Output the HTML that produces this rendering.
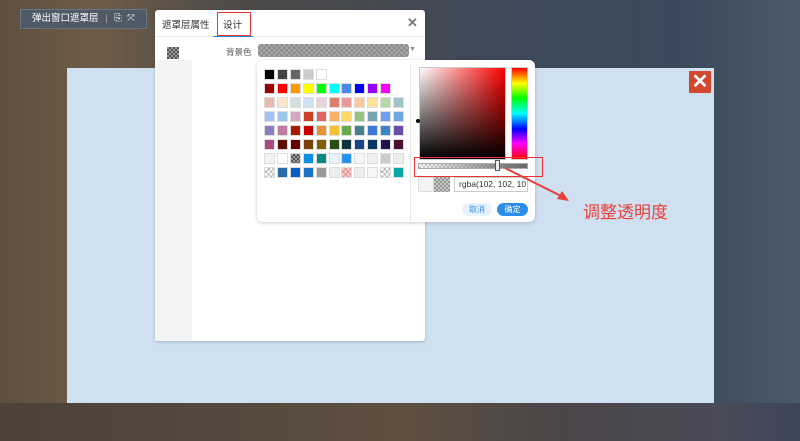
<!DOCTYPE html>
<html><head><meta charset="utf-8"><style>
*{margin:0;padding:0;box-sizing:border-box}
body{width:800px;height:441px;overflow:hidden;position:relative;font-family:"Liberation Sans","Noto Sans CJK SC",sans-serif;font-size:9px;
background:linear-gradient(90deg,#5d5040 0%,#6d5c48 12%,#4d4a48 30%,#3f4a58 60%,#3a4a5c 85%,#4a5a6a 100%);}
.bot{position:absolute;left:0;top:403px;width:800px;height:38px;background:linear-gradient(90deg,#4d4238,#54493e 30%,#5e5040 50%,#4a4548 70%,#4a4a58 90%,#3c4658)}
.abs{position:absolute}
.panel{left:67px;top:68px;width:647px;height:335px;background:#cfe0f1}
.tb{left:20px;top:9px;width:127px;height:20px;background:#505a66;border:1px solid #6a7480;color:#fff;font-size:9.5px;line-height:18px;padding-left:11px}
.dlg{left:155px;top:10px;width:270px;height:331px;background:#fff;border-radius:3px;box-shadow:0 1px 3px rgba(0,0,0,.2)}
.pop{left:257px;top:60px;width:278px;height:162px;background:#fff;border-radius:6px;box-shadow:0 1px 4px rgba(0,0,0,.2)}
.sw{position:absolute;width:11px;height:11px;border:1px solid #ddd}
.chk{background:repeating-conic-gradient(#bbb 0 25%,#fff 0 50%) 0 0/5px 5px}
.chkd{background:repeating-conic-gradient(#555 0 25%,#999 0 50%) 0 0/4px 4px}
.btn{position:absolute;height:13px;border-radius:7px;font-size:8px;line-height:13px;text-align:center}
</style></head><body>
<div class="bot"></div>
<div class="abs panel"></div>
<div class="abs" style="left:689px;top:71px;width:22px;height:22px;background:#d2462c;color:#fff;font-size:20px;font-weight:bold;line-height:22px;text-align:center">✕</div>
<div class="abs tb">弹出窗口遮罩层 <span style="color:#aaa;margin:0 4px">|</span> ⎘ &nbsp;⤧</div>
<div class="abs dlg">
  <div class="abs" style="left:0;top:0;width:270px;height:27px;border-bottom:1px solid #e8e8e8"></div>
  <div class="abs" style="left:7px;top:7px;font-size:9.5px;color:#333">遮罩层属性</div>
  <div class="abs" style="left:68px;top:7px;font-size:9.5px;color:#333">设计</div>
  <div class="abs" style="left:62px;top:2px;width:34px;height:24px;border:1.5px solid #e33"></div>
  <div class="abs" style="left:58px;top:26px;width:40px;height:1px;background:#2a8ae0"></div>
  <div class="abs" style="left:252px;top:5px;font-size:13px;color:#777;font-weight:bold">✕</div>
  <div class="abs" style="left:0;top:50px;width:37px;height:281px;background:#f4f4f4"></div>
  <div class="abs chkd" style="left:12px;top:37px;width:12px;height:12px"></div>
  <div class="abs" style="left:71px;top:36px;font-size:8.5px;color:#555">背景色</div>
  <div class="abs" style="left:103px;top:34px;width:151px;height:13px;border-radius:3px;background:repeating-conic-gradient(#8a8a8a 0 25%,#a8a8a8 0 50%) 0 0/5px 5px"></div>
  <div class="abs" style="left:254px;top:36px;font-size:7px;color:#888">▼</div>
</div>
<div class="abs pop" id="pop">
  <div class="abs" style="left:153px;top:5px;width:1px;height:157px;background:#e6e6e6"></div>
  <div class="abs" style="left:162px;top:7px;width:87px;height:93px;background:linear-gradient(0deg,#000,transparent),linear-gradient(90deg,#fff,#f00);border:1px solid #ccc"></div>
  <div class="abs" style="left:159px;top:59px;width:4px;height:4px;border-radius:50%;background:#000"></div>
  <div class="abs" style="left:254px;top:7px;width:17px;height:93px;border:1px solid #ccc;background:linear-gradient(180deg,#f00,#ff0 17%,#0f0 33%,#0ff 50%,#00f 67%,#f0f 83%,#f00)"></div>
  <div class="abs" style="left:161px;top:103px;width:110px;height:6px;border:1px solid #aaa;background:linear-gradient(90deg,rgba(102,102,102,0),#666),repeating-conic-gradient(#ccc 0 25%,#fff 0 50%) 0 0/4px 4px"></div>
  <div class="abs" style="left:238px;top:100px;width:5px;height:11px;background:#eee;border:1px solid #555"></div>
  <div class="abs" style="left:161px;top:117px;width:16px;height:15px;background:#f3f3f3;border:1px solid #ddd"></div>
  <div class="abs chkd" style="left:177px;top:117px;width:16px;height:15px;opacity:.6"></div>
  <div class="abs" style="left:197px;top:117px;width:74px;height:15px;border:1px solid #ccc;font-size:8.5px;line-height:13px;padding-left:4px;color:#333;overflow:hidden;white-space:nowrap">rgba(102, 102, 10</div>
  <div class="btn" style="left:205px;top:143px;width:30px;background:#e8f2fc;color:#3a8ee6">取消</div>
  <div class="btn" style="left:240px;top:143px;width:31px;background:#2a8ee8;color:#fff">确定</div>
</div>
<div class="abs" style="left:414px;top:157px;width:129px;height:20px;border:1.5px solid #e33"></div>
<svg class="abs" style="left:0;top:0" width="800" height="441"><line x1="505" y1="168" x2="563" y2="197" stroke="#e8403a" stroke-width="2"/><polygon points="569,201 557,199 562,191" fill="#e8403a"/></svg>
<div class="abs" style="left:583px;top:198px;font-size:17px;color:#e8403a">调整透明度</div>
<script>
var rows=[
["000","444","666","ccc","fff"],
["900","f00","f90","ff0","0f0","0ff","4a86e8","00f","90f","f0f"],
["e6b8af","fce5cd","d0e0e3","cfe2f3","ead1dc","dd7e6b","ea9999","f9cb9c","ffe599","b6d7a8","a2c4c9"],
["a4c2f4","9fc5e8","d5a6bd","cc4125","e06666","f6b26b","ffd966","93c47d","76a5af","6d9eeb","6fa8dc"],
["8e7cc3","c27ba0","a61c00","c00","e69138","f1c232","6aa84f","45818e","3c78d8","3d85c6","674ea7"],
["a64d79","5b0f00","600","783f04","7f6000","274e13","0c343d","1c4587","073763","20124d","4c1130"],
["f3f3f3","fff","D","0b8fe0","0a8880","e8f2fb","2a92f0","f5f5f5","f0f0f0","ccc","eee"],
["C","2d6ba8","0b5dbf","1a73c8","999","eee","P","eee","f5f5f5","C","0aa8a8"]];
var p=document.getElementById('pop'),h='';
rows.forEach(function(r,i){r.forEach(function(c,j){var x=7+j*12.9,y=9+i*14;
var st='left:'+x+'px;top:'+y+'px;';var cl='sw';
if(c=='C')cl+=' chk';else if(c=='D')cl+=' chkd';else if(c=='P')st+='background:repeating-conic-gradient(#d99 0 25%,#fcc 0 50%) 0 0/5px 5px;';else st+='background:#'+c+';';
h+='<div class="'+cl+'" style="'+st+'"></div>';});});
p.insertAdjacentHTML('beforeend',h);
</script>
</body></html>
